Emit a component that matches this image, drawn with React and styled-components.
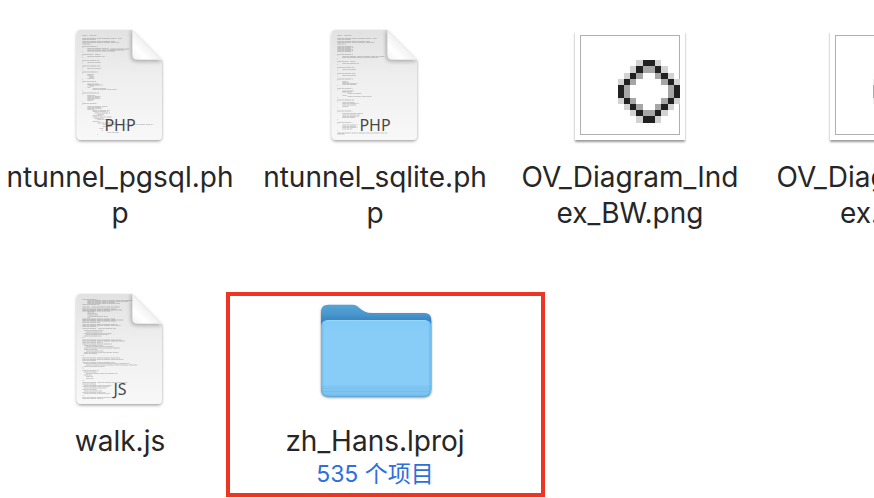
import styled, { createGlobalStyle } from 'styled-components';

const GlobalStyle = createGlobalStyle`
  * {
    margin: 0;
    padding: 0;
    box-sizing: border-box;
  }

  body {
    background-color: #ffffff;
    font-family: Inter, 'Noto Sans CJK SC', sans-serif;
    overflow: hidden;
  }
`
const Window = styled.main`
  min-height: 100vh;
  padding-top: 20px;
  overflow: hidden;
`
const Grid = styled.ul`
  display: grid;
  grid-template-columns: repeat(4, 240px);
  gap: 53px 15px;
  list-style: none;
`
const Item = styled.li`
  position: relative;
  display: flex;
  flex-direction: column;
  align-items: center;
`
const Icon = styled.svg`
  display: block;
  height: 130px;
  margin-bottom: 9px;
`
const FileName = styled.p`
  width: 100%;
  padding: 0 6px;
  color: #262626;
  font-size: 28px;
  line-height: 36px;
  text-align: center;
  word-break: break-all;
`
const Count = styled.p`
  color: #2f6fdb;
  font-size: 23px;
  line-height: 30px;
`
const Highlight = styled.div`
  position: absolute;
  top: 8px;
  right: -50px;
  bottom: -8px;
  left: -29px;
  border: 4px solid #ee3524;
  pointer-events: none;
`
const Kind = styled.text`
  fill: #484848;
  font-family: 'Noto Sans', sans-serif;
  font-size: 48px;
  text-anchor: middle;
`

// every entry is [y, start, end] of one line of code on the page
const phpHead = [
  [46, 67, 82], [46, 88, 110], [55, 67, 170], [55, 174, 185], [59, 67, 107],
  [65, 67, 165], [68, 67, 178], [72, 67, 92],
]

const pgsqlLines = [
  ...phpHead,
  [79, 67, 113], [82, 67, 69], [86, 82, 146], [87, 152, 208], [90, 82, 195], [93, 82, 168], [96, 67, 69],
  [103, 67, 100], [103, 105, 121], [106, 67, 69], [109, 82, 134], [112, 67, 69],
  [121, 67, 118], [124, 67, 69], [127, 82, 124], [130, 67, 69],
  [138, 67, 121], [141, 67, 69], [145, 82, 123], [148, 67, 69],
  [156, 67, 114], [159, 67, 69], [163, 82, 102], [166, 82, 98], [169, 88, 103], [172, 88, 101], [175, 82, 104], [178, 67, 69],
  [185, 67, 110], [188, 67, 69], [192, 82, 116], [195, 82, 129], [198, 88, 103], [202, 82, 91], [205, 98, 139], [208, 98, 170], [211, 67, 69],
  [219, 67, 117], [222, 67, 69], [226, 82, 106], [229, 82, 122], [232, 82, 118], [235, 82, 121], [238, 82, 104], [242, 82, 98], [245, 67, 69],
  [251, 67, 112], [254, 67, 69], [259, 82, 143], [262, 82, 127], [265, 82, 126], [269, 82, 103], [272, 98, 150],
  [275, 98, 144], [279, 104, 150], [283, 112, 132], [287, 98, 126], [291, 98, 154], [295, 104, 130], [299, 112, 148],
  [304, 98, 120], [309, 112, 170], [314, 128, 278], [319, 128, 158], [325, 118, 130], [331, 125, 129], [337, 142, 177], [343, 112, 115],
]

const sqliteLines = [
  ...phpHead,
  [79, 67, 113], [82, 67, 115], [85, 67, 109], [88, 67, 114], [91, 67, 114], [94, 67, 112],
  [103, 67, 114], [106, 67, 69], [109, 82, 208], [112, 82, 190], [117, 67, 69],
  [124, 67, 100], [124, 105, 121], [127, 67, 69], [130, 82, 132], [133, 67, 69],
  [142, 67, 118], [145, 67, 69], [149, 82, 123], [152, 67, 69],
  [160, 67, 121], [163, 67, 69], [167, 82, 123], [170, 67, 69],
  [177, 67, 114], [180, 67, 69], [184, 82, 97], [187, 82, 102], [190, 82, 128], [193, 82, 126], [197, 67, 69],
  [206, 67, 113], [209, 67, 69], [213, 82, 116], [216, 82, 110], [221, 98, 139], [226, 82, 96], [229, 98, 170], [233, 67, 69],
  [240, 67, 117], [243, 67, 69], [247, 82, 118], [251, 82, 131], [255, 82, 124], [259, 82, 100], [264, 67, 69],
  [273, 67, 112], [276, 67, 69], [281, 82, 144], [285, 82, 134], [289, 82, 131], [293, 82, 120], [298, 67, 69],
  [307, 67, 112], [311, 67, 69], [315, 82, 128], [319, 82, 124], [323, 82, 128], [327, 82, 112], [331, 67, 69],
  [339, 67, 218], [342, 67, 90],
]

const walkLines = [
  [46, 67, 113], [49, 82, 217], [52, 82, 205], [55, 82, 166], [59, 82, 180], [62, 67, 118],
  [69, 67, 90], [69, 95, 180], [75, 67, 170], [78, 67, 186], [81, 67, 154], [84, 82, 104],
  [89, 82, 110], [93, 82, 114], [97, 88, 143], [100, 82, 90],
  [105, 67, 165], [108, 67, 190], [111, 67, 168], [115, 67, 120],
  [122, 67, 173], [125, 67, 182], [128, 67, 112], [134, 67, 110], [134, 115, 168],
  [140, 72, 130], [144, 78, 126], [148, 72, 155], [152, 78, 146], [156, 72, 124], [161, 67, 72],
  [168, 67, 184], [171, 67, 194], [175, 67, 128], [180, 67, 156],
  [184, 72, 128], [188, 78, 160], [192, 72, 180], [196, 72, 112], [201, 78, 130], [205, 72, 176], [209, 72, 112], [214, 67, 71],
  [222, 67, 180], [226, 67, 190], [230, 67, 110], [235, 67, 164], [239, 72, 208], [243, 78, 232], [247, 72, 134], [252, 67, 71],
  [260, 67, 116], [264, 72, 110], [268, 78, 172], [273, 72, 96], [278, 78, 100], [284, 78, 102], [289, 67, 71],
  [295, 67, 108], [295, 112, 202], [300, 67, 110], [304, 72, 154], [308, 67, 148], [312, 72, 140], [316, 67, 112],
  [321, 72, 126], [325, 67, 136], [329, 72, 150], [334, 67, 71], [340, 67, 156], [344, 67, 130],
]

const pixels = [
  '...lddl...',
  '..ldggdl..',
  '.ldg..gdl.',
  'ldg....gdl',
  'dg......gd',
  'dg......gd',
  'ldg....gdl',
  '.ldg..gdl.',
  '..ldggdl..',
  '...lddl...',
]
const xEdges = [53, 59, 65, 71, 78, 84, 90, 96, 103, 109, 115]
const yEdges = [40, 46, 53, 59, 65, 71, 78, 84, 90, 96, 103]

const blackInk = { d: '#202020', g: '#a6a6a6', l: '#d2d2d2' }
const greyInk = { d: '#aaaaaa', g: '#dddddd', l: '#ededed' }

const DocumentIcon = ({id, kind, lines}) => {
  return (
    <Icon width="120" viewBox="0 0 360 390" role="img" aria-label={kind}>
      <defs>
        <linearGradient id={`${id}-page`} x1="0" y1="0" x2="0" y2="1">
          <stop offset="0" stopColor="#e2e2e2"/>
          <stop offset="0.45" stopColor="#efefef"/>
          <stop offset="1" stopColor="#f8f8f8"/>
        </linearGradient>
        <linearGradient id={`${id}-fold`} x1="0.5" y1="0.5" x2="0" y2="1">
          <stop offset="0" stopColor="#f1f1f1"/>
          <stop offset="0.5" stopColor="#ffffff"/>
          <stop offset="1" stopColor="#f2f2f2"/>
        </linearGradient>
        <filter id={`${id}-shadow`} x="-10%" y="-10%" width="120%" height="120%">
          <feDropShadow dx="0" dy="4" stdDeviation="4" floodColor="#000000" floodOpacity="0.38"/>
        </filter>
        <filter id={`${id}-soft`} x="-30%" y="-30%" width="160%" height="160%">
          <feGaussianBlur stdDeviation="6"/>
        </filter>
        <clipPath id={`${id}-clip`}>
          <path d="M63 30H217L306 119V346Q306 360 292 360H64Q50 360 50 346V43Q50 30 63 30Z"/>
        </clipPath>
      </defs>
      <path
        d="M63 30H217L306 119V346Q306 360 292 360H64Q50 360 50 346V43Q50 30 63 30Z"
        fill={`url(#${id}-page)`}
        filter={`url(#${id}-shadow)`}
      />
      <g clipPath={`url(#${id}-clip)`}>
        {lines.map(([y, start, end]) =>
          <path
            key={`${y}-${start}`}
            d={`M${start} ${y}H${end}`}
            stroke="#686868"
            strokeWidth="2"
            strokeDasharray="13 1 7 1 19 2"
            opacity="0.52"
          />
        )}
        <path d="M214 30V108Q214 124 230 124H307L217 30Z" fill="#000000" opacity="0.3" filter={`url(#${id}-soft)`}/>
      </g>
      <path d="M217 30L306 119H232Q217 119 217 104Z" fill={`url(#${id}-fold)`}/>
      <Kind x="180" y="332">{kind}</Kind>
    </Icon>
  )
}

const ImageIcon = ({id, ink}) => {
  return (
    <Icon width="130" viewBox="0 0 130 130" aria-hidden="true">
      <defs>
        <filter id={id} x="-10%" y="-10%" width="120%" height="120%">
          <feDropShadow dx="0" dy="2" stdDeviation="1.3" floodColor="#000000" floodOpacity="0.4"/>
        </filter>
      </defs>
      <path d="M10 11H120V120H10Z" fill="#ffffff" filter={`url(#${id})`}/>
      <rect x="15.5" y="15.5" width="99" height="99" fill="#ffffff" stroke="#b0b0b0"/>
      <g shapeRendering="crispEdges">
        {pixels.map((row, y) =>
          row.split('').map((dot, x) => dot !== '.' &&
            <rect
              key={`${x}-${y}`}
              x={xEdges[x]}
              y={yEdges[y]}
              width={xEdges[x + 1] - xEdges[x]}
              height={yEdges[y + 1] - yEdges[y]}
              fill={ink[dot]}
            />
          )
        )}
      </g>
    </Icon>
  )
}

const FolderIcon = () => {
  return (
    <Icon width="140" viewBox="0 -18 420 390" aria-hidden="true">
      <defs>
        <linearGradient id="folder-back" x1="0" y1="0" x2="0" y2="1">
          <stop offset="0" stopColor="#56a4d4"/>
          <stop offset="0.1" stopColor="#4a97cd"/>
          <stop offset="0.2" stopColor="#327dc0"/>
          <stop offset="1" stopColor="#327dc0"/>
        </linearGradient>
        <linearGradient id="folder-front" x1="0" y1="0" x2="0" y2="1">
          <stop offset="0" stopColor="#82cbf8"/>
          <stop offset="0.2" stopColor="#88cdf7"/>
          <stop offset="0.84" stopColor="#88cdf7"/>
          <stop offset="1" stopColor="#78bfeb"/>
        </linearGradient>
        <linearGradient id="folder-side" x1="0" y1="0" x2="1" y2="0">
          <stop offset="0" stopColor="#5dade0" stopOpacity="0.65"/>
          <stop offset="0.03" stopColor="#5dade0" stopOpacity="0"/>
          <stop offset="0.97" stopColor="#5dade0" stopOpacity="0"/>
          <stop offset="1" stopColor="#5dade0" stopOpacity="0.65"/>
        </linearGradient>
        <filter id="folder-shadow" x="-10%" y="-10%" width="120%" height="120%">
          <feDropShadow dx="0" dy="3" stdDeviation="3" floodColor="#000000" floodOpacity="0.42"/>
        </filter>
      </defs>
      <path
        d="M48 66Q48 44 70 44H142C164 44 168 69 200 69H358Q379 69 379 91V298Q379 320 357 320H70Q48 320 48 298Z"
        fill="url(#folder-back)"
        filter="url(#folder-shadow)"
      />
      <path d="M48 112Q48 90 70 90H357Q379 90 379 112V298Q379 320 357 320H70Q48 320 48 298Z" fill="url(#folder-front)"/>
      <path d="M48 112Q48 90 70 90H357Q379 90 379 112V298Q379 320 357 320H70Q48 320 48 298Z" fill="url(#folder-side)"/>
      <path d="M64 92H363" stroke="#9bd8fb" strokeWidth="3"/>
      <path d="M49 289H378M49 295H378M50 304H377" stroke="#62addd" strokeWidth="2" opacity="0.5"/>
      <path d="M54 312Q60 319 72 319H355Q367 319 373 312" fill="none" stroke="#5da6d8" strokeWidth="3"/>
    </Icon>
  )
}

function App() {

  const files = [
    {
      name: "ntunnel_pgsql.php",
      icon: <DocumentIcon id="pgsql" kind="PHP" lines={pgsqlLines}/>
    },
    {
      name: "ntunnel_sqlite.php",
      icon: <DocumentIcon id="sqlite" kind="PHP" lines={sqliteLines}/>
    },
    {
      name: "OV_Diagram_Index_BW.png",
      icon: <ImageIcon id="index-bw" ink={blackInk}/>
    },
    {
      name: "OV_Diagram_Index.png",
      icon: <ImageIcon id="index" ink={greyInk}/>
    },
    {
      name: "walk.js",
      icon: <DocumentIcon id="walk" kind="JS" lines={walkLines}/>
    },
    {
      name: "zh_Hans.lproj",
      icon: <FolderIcon/>,
      count: "535 个项目",
      highlighted: true
    }
  ]

  return (
    <>
      <GlobalStyle/>
      <Window>
        <Grid>
          {files.map(({name, icon, count, highlighted}) =>
            <Item key={name}>
              {icon}
              <FileName>{name}</FileName>
              {count && <Count>{count}</Count>}
              {highlighted && <Highlight/>}
            </Item>
          )}
        </Grid>
      </Window>
    </>
  );
}

export default App;
